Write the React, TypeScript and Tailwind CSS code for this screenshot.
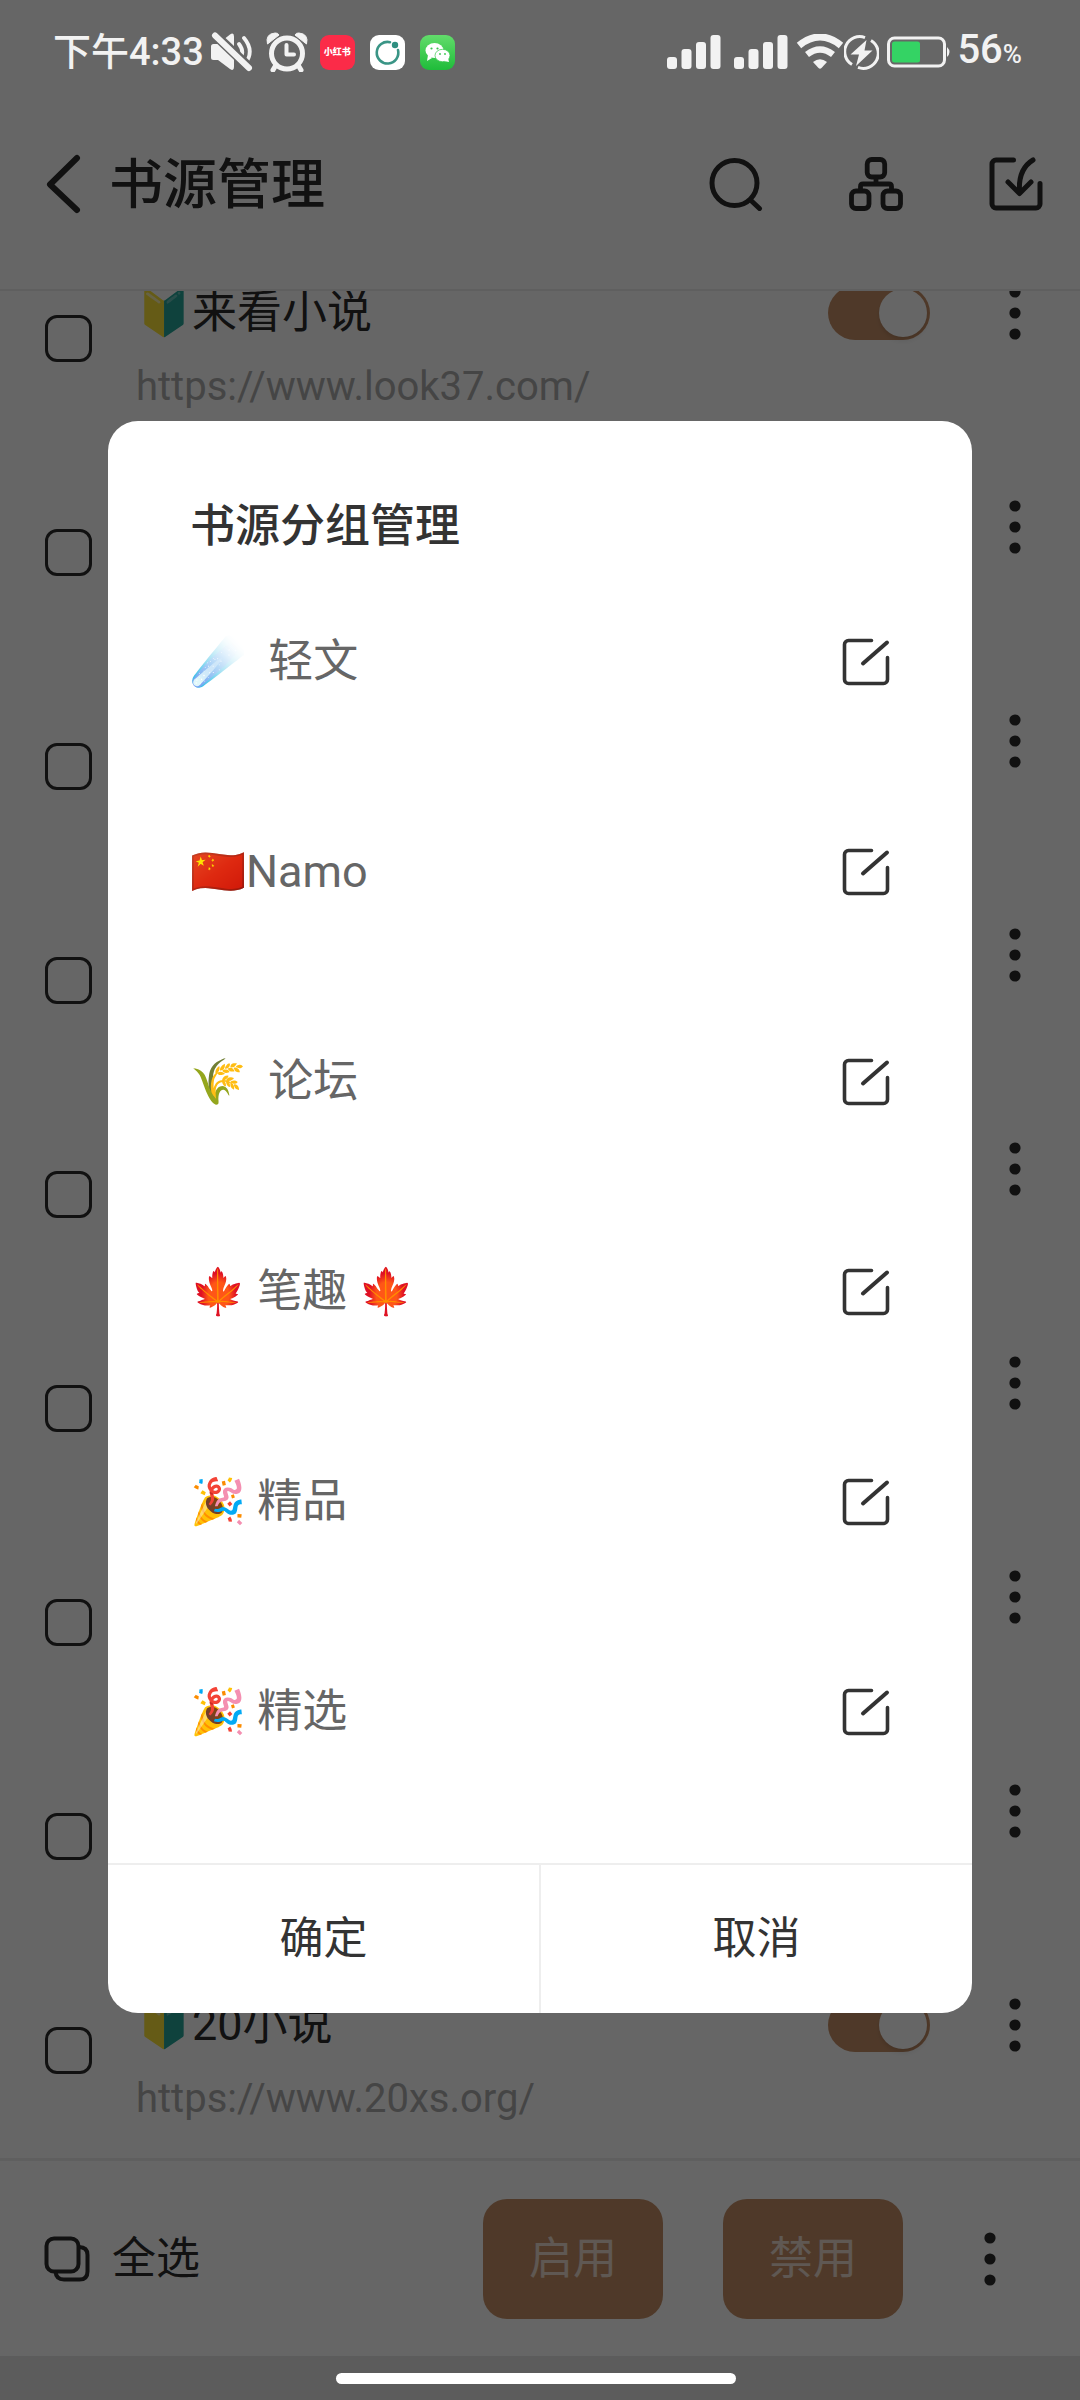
import React, { useState } from 'react';

const sources = [
  { name: '🔰来看小说', url: 'https://www.look37.com/' },
  { name: '', url: '' },
  { name: '', url: '' },
  { name: '', url: '' },
  { name: '', url: '' },
  { name: '', url: '' },
  { name: '', url: '' },
  { name: '', url: '' },
  { name: '🔰20小说', url: 'https://www.20xs.org/' },
];

const groups = ['☄️  轻文', '🇨🇳Namo', '🌾  论坛', '🍁 笔趣 🍁', '🎉 精品', '🎉 精选'];

const MoreIcon: React.FC = () => (
  <svg width="12" height="54" viewBox="0 0 12 54" fill="currentColor">
    <circle cx="6" cy="6" r="5.6" />
    <circle cx="6" cy="27" r="5.6" />
    <circle cx="6" cy="48" r="5.6" />
  </svg>
);

const EditIcon: React.FC = () => (
  <svg width="48" height="48" viewBox="0 0 48 48" fill="none" stroke="currentColor" strokeWidth="3.6" strokeLinecap="round" strokeLinejoin="round">
    <path d="M29.5 2.5H6.5a4 4 0 0 0-4 4v35a4 4 0 0 0 4 4h35a4 4 0 0 0 4-4V19.5" />
    <path d="M21 25.5 45 4.5" strokeWidth="4" />
  </svg>
);

const SignalIcon: React.FC = () => (
  <svg width="54" height="36" viewBox="0 0 54 36" fill="currentColor">
    <rect x="0" y="23" width="10" height="12" rx="3" />
    <rect x="14.5" y="15" width="10" height="20" rx="3" />
    <rect x="29" y="8" width="10" height="27" rx="3" />
    <rect x="43.5" y="1" width="10" height="34" rx="3" />
  </svg>
);

const StatusBar: React.FC = () => (
  <div className="flex h-[78px] items-center justify-between pt-[26px] pl-[53px] pr-[58px] text-[38px] font-medium leading-[52px] text-[#f2f2f2]">
    <div className="flex items-center">
      <span>下午4:33</span>
      {/* Muted speaker */}
      <svg className="ml-[6px]" width="44" height="40" viewBox="0 0 44 40">
        <path d="M1 14.5q0-2.5 2.5-2.5H8L20 2.500q4-2.500 4 2V35q0 4.500-4 2L8 28H3.500Q1 28 1 25.500Z" fill="currentColor" />
        <path d="M29 12q6 8 1 15M34 6q11 13 1 26" fill="none" stroke="currentColor" strokeWidth="3.8" strokeLinecap="round" />
        <path d="M3 1 42 38" stroke="#666666" strokeWidth="10" />
        <path d="M5 3.500 39 36" stroke="currentColor" strokeWidth="6" strokeLinecap="round" />
      </svg>
      {/* Alarm clock */}
      <svg className="ml-3" width="42" height="40" viewBox="0 0 42 40" fill="none" stroke="currentColor">
        <path d="M1.500 12Q-1 2 9 1q3-.3 4 2ZM40.500 12Q43 2 33 1q-3-.3-4 2Z" fill="currentColor" strokeWidth="1" />
        <path d="m10 33-3 5M32 33l3 5" strokeWidth="5" strokeLinecap="round" />
        <circle cx="21" cy="21.5" r="15.5" strokeWidth="5" />
        <path d="M20.500 13v9.500H28" strokeWidth="4" strokeLinecap="round" strokeLinejoin="round" />
      </svg>
      <span className="ml-3 flex size-[35px] items-center justify-center rounded-[9px] bg-[#fb2b48] text-[9px] font-black leading-none text-white">小红书</span>
      <svg className="ml-[15px]" width="35" height="35" viewBox="0 0 35 35">
        <rect width="35" height="35" rx="9" fill="#fff" />
        <path d="M20 7.200A10.800 10.800 0 1 0 28 15" fill="none" stroke="#3a9586" strokeWidth="2.6" strokeLinecap="round" />
        <circle cx="25" cy="10" r="3.2" fill="#2e8f80" />
      </svg>
      <svg className="ml-[15px]" width="35" height="35" viewBox="0 0 35 35">
        <defs>
          <linearGradient id="chat" x1="0" y1="0" x2="0" y2="1">
            <stop offset="0" stopColor="#62dc6b" />
            <stop offset="1" stopColor="#1fbc3a" />
          </linearGradient>
        </defs>
        <rect width="35" height="35" rx="9" fill="url(#chat)" />
        <ellipse cx="14.5" cy="15.5" rx="9" ry="7.5" fill="#fff" />
        <path d="m8 20-1 6 5-3Z" fill="#fff" />
        <ellipse cx="22.5" cy="20.5" rx="7.5" ry="6.2" fill="#fff" stroke="#37c64c" strokeWidth="0.7" />
        <path d="m24 26 5 1-1-4Z" fill="#fff" />
        <g fill="#37c64c">
          <circle cx="11.5" cy="13.5" r="1.1" />
          <circle cx="17.5" cy="13.5" r="1.1" />
          <circle cx="20" cy="19" r="0.9" />
          <circle cx="25" cy="19" r="0.9" />
        </g>
      </svg>
    </div>
    <div className="flex items-center">
      <SignalIcon />
      <span className="w-[13px]" />
      <SignalIcon />
      <svg className="ml-2" width="48" height="36" viewBox="0 0 48 36" fill="none" stroke="currentColor">
        <path d="M3 11.500q21-17 42 0" strokeWidth="7" />
        <path d="M11 20.500q13-10 26 0" strokeWidth="6.5" />
        <path d="M17 28q7-5.500 14 0l-5.500 6q-1.500 1.500-3 0Z" fill="currentColor" stroke="none" />
      </svg>
      <svg width="35" height="35" viewBox="0 0 35 35">
        <path d="M21 2.600A15 15 0 0 0 8 29.500M14 32.400A15 15 0 0 0 27 5.500" fill="none" stroke="currentColor" strokeWidth="3" />
        <path d="M22.500 5 6.500 19.500h8.500L12 31l16.500-15.500h-8Z" fill="currentColor" />
      </svg>
      <svg className="ml-2" width="66" height="32" viewBox="0 0 66 32">
        <rect x="1.5" y="2" width="56" height="28" rx="6" fill="none" stroke="currentColor" strokeWidth="3" />
        <rect x="5" y="5.5" width="28" height="21" rx="2.5" fill="#34d364" />
        <path d="M60 11q5 5 0 10Z" fill="currentColor" />
      </svg>
      <span className="ml-1 text-[40px]">56<span className="text-[26px]">%</span></span>
    </div>
  </div>
);

const Header: React.FC = () => (
  <header className="mt-[78px] flex h-[213px] shrink-0 items-center border-b-2 border-[#ededed] pr-[37px] pl-[45px]">
    <button aria-label="返回">
      <svg width="36" height="60" viewBox="0 0 36 60" fill="none" stroke="currentColor" strokeWidth="6" strokeLinecap="round" strokeLinejoin="round">
        <path d="M32 4 5 30.500 32 56" />
      </svg>
    </button>
    <h1 className="ml-7 flex-1 pt-1 text-[54px] font-medium leading-[72px]">书源管理</h1>
    <div className="flex items-center gap-[86px]">
      <button aria-label="搜索">
        <svg width="54" height="54" viewBox="0 0 54 54" fill="none" stroke="currentColor" strokeWidth="5" strokeLinecap="round">
          <circle cx="25.5" cy="26" r="22.5" />
          <path d="m42 43.500 8.500 8" />
        </svg>
      </button>
      <button aria-label="分组">
        <svg width="54" height="54" viewBox="0 0 54 54" fill="none" stroke="currentColor" strokeWidth="4.8">
          <rect x="18.2" y="2.5" width="17.5" height="17.5" rx="4.5" />
          <rect x="2.5" y="34" width="17.5" height="17.5" rx="4.5" />
          <rect x="34" y="34" width="17.5" height="17.5" rx="4.5" />
          <path d="M27 20v7M11.500 34v-4.500q0-2.500 2.500-2.500h26q2.500 0 2.500 2.500V34" />
        </svg>
      </button>
      <button aria-label="导入">
        <svg width="54" height="54" viewBox="0 0 54 54" fill="none" stroke="currentColor" strokeWidth="5" strokeLinecap="round" strokeLinejoin="round">
          <path d="M24.500 3H7a4 4 0 0 0-4 4v40a4 4 0 0 0 4 4h40a4 4 0 0 0 4-4V26.500" />
          <path d="M44 3Q29 12 30.500 35M19 25l11.500 11.500L42 25" />
        </svg>
      </button>
    </div>
  </header>
);

const SourceRow: React.FC<{ name: string; url: string }> = ({ name, url }) => (
  <li className="flex">
    <label className="flex items-center pl-[45px]">
      <input type="checkbox" aria-label="选择书源" className="size-[47px] appearance-none rounded-[12px] border-3 border-[#2b2b2b]" />
    </label>
    <div className="flex-1 pt-[52px] pr-[59px] pb-[30px] pl-11">
      <div className="flex h-[60px] items-center">
        <span className="flex-1 text-[45px] leading-[60px]">{name}</span>
        <input
          type="checkbox"
          role="switch"
          aria-label="启用书源"
          defaultChecked
          className="flex h-[54px] w-[102px] appearance-none items-center justify-end rounded-full bg-[#c69068] pr-[3px] before:size-[48px] before:rounded-full before:bg-white before:shadow-md"
        />
        <button aria-label="更多" className="ml-[79px]">
          <MoreIcon />
        </button>
      </div>
      <p className="mt-4 h-14 text-[40px] leading-[56px] text-[#acacac]">{url}</p>
    </div>
  </li>
);

const BottomBar: React.FC = () => (
  <footer className="flex h-[198px] shrink-0 items-center border-t-3 border-[#ededed] pr-[84px] pl-[44px] text-[44px] leading-[60px]">
    <button className="flex items-center gap-[22px]">
      <svg width="46" height="46" viewBox="0 0 46 46" fill="none" stroke="currentColor" strokeWidth="4" strokeLinejoin="round">
        <rect x="2.5" y="2.5" width="32" height="33" rx="7.5" />
        <path d="M35 11q8.500 0 8.500 8v16.500q0 8-8 8H20q-8 0-8.500-8" />
      </svg>
      <span>全选</span>
    </button>
    <div className="ml-auto flex items-center gap-[60px]">
      <button className="h-[120px] w-[180px] rounded-3xl bg-[#c69068] text-white/70">启用</button>
      <button className="h-[120px] w-[180px] rounded-3xl bg-[#c69068] text-white/70">禁用</button>
    </div>
    <button aria-label="更多操作" className="ml-[81px]">
      <MoreIcon />
    </button>
  </footer>
);

const GroupDialog: React.FC<{ onClose: () => void }> = ({ onClose }) => (
  <div role="dialog" aria-labelledby="group-title" className="w-4/5 overflow-hidden rounded-[30px] bg-white text-[45px] text-[#333333]">
    <h2 id="group-title" className="px-[82px] pt-[76px] font-medium leading-[60px]">书源分组管理</h2>
    <ul className="px-[82px] pb-[46px] text-[#666666]">
      {groups.map((group) => (
        <li key={group} className="flex items-center justify-between py-[76px]">
          <span className="whitespace-pre leading-[58px]">{group}</span>
          <button aria-label="编辑" className="text-[#333333]">
            <EditIcon />
          </button>
        </li>
      ))}
    </ul>
    <div className="flex border-t-2 border-[#eeeeee] text-[44px]">
      <button onClick={onClose} className="flex-1 border-r-2 border-[#eeeeee] py-11 leading-[60px]">确定</button>
      <button onClick={onClose} className="flex-1 py-11 leading-[60px]">取消</button>
    </div>
  </div>
);

const App: React.FC = () => {
  const [open, setOpen] = useState(true);

  return (
    <div className="relative h-screen overflow-hidden font-[Roboto,'Noto_Sans_CJK_SC',sans-serif]">
      {/* Page */}
      <div className="flex h-full flex-col bg-white text-[#2b2b2b]">
        <Header />
        <main className="min-h-0 flex-1 overflow-hidden">
          <ul className="-mt-[60px]">
            {sources.map((source, index) => (
              <SourceRow key={index} name={source.name} url={source.url} />
            ))}
          </ul>
        </main>
        <BottomBar />
        <div className="h-11 shrink-0 bg-[#e6e6e6]"></div>
      </div>

      {/* Scrim, system bars and dialog */}
      <div className="absolute inset-0 flex flex-col bg-black/60">
        <StatusBar />
        <div className="flex flex-1 items-center justify-center">
          {open && <GroupDialog onClose={() => setOpen(false)} />}
        </div>
        <div className="flex h-11 items-center justify-center pr-2">
          <div className="h-[11px] w-[400px] rounded-full bg-white"></div>
        </div>
      </div>
    </div>
  );
};

export default App;
